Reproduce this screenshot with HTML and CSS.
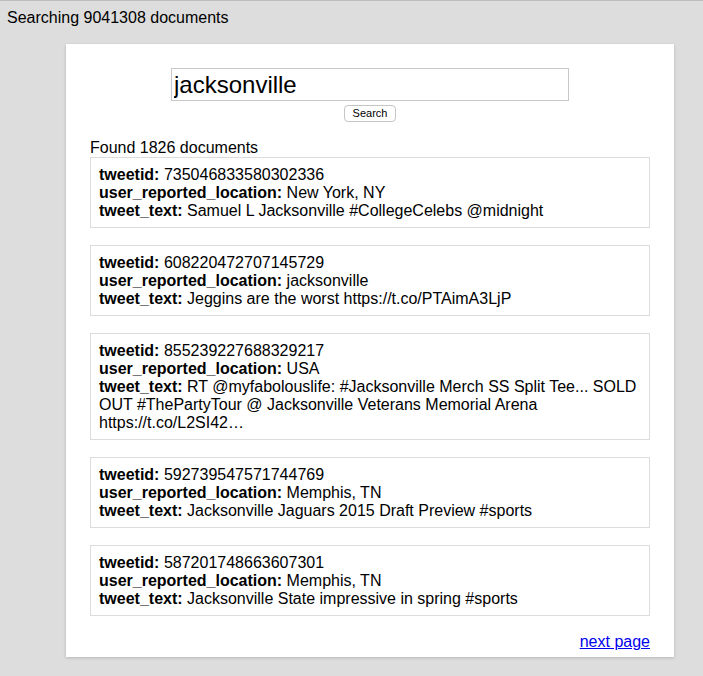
FILE: index.html
```html
<!DOCTYPE html>
<html>
<head>
<meta charset="utf-8">
<link rel="stylesheet" href="styles.css">
</head>
<body>
<div class="status">Searching 9041308 documents</div>
<div class="card">
  <form class="search">
    <input class="query" type="text" value="jacksonville">
    <button class="btn" type="button">Search</button>
  </form>
  <div class="found">Found 1826 documents</div>
  <div class="result">
    <div><b>tweetid:</b> 735046833580302336</div>
    <div><b>user_reported_location:</b> New York, NY</div>
    <div><b>tweet_text:</b> Samuel L Jacksonville #CollegeCelebs @midnight</div>
  </div>
  <div class="result">
    <div><b>tweetid:</b> 608220472707145729</div>
    <div><b>user_reported_location:</b> jacksonville</div>
    <div><b>tweet_text:</b> Jeggins are the worst https://t.co/PTAimA3LjP</div>
  </div>
  <div class="result">
    <div><b>tweetid:</b> 855239227688329217</div>
    <div><b>user_reported_location:</b> USA</div>
    <div><b>tweet_text:</b> RT @myfabolouslife: #Jacksonville Merch SS Split Tee... SOLD OUT #ThePartyTour @ Jacksonville Veterans Memorial Arena https://t.co/L2SI42…</div>
  </div>
  <div class="result">
    <div><b>tweetid:</b> 592739547571744769</div>
    <div><b>user_reported_location:</b> Memphis, TN</div>
    <div><b>tweet_text:</b> Jacksonville Jaguars 2015 Draft Preview #sports</div>
  </div>
  <div class="result">
    <div><b>tweetid:</b> 587201748663607301</div>
    <div><b>user_reported_location:</b> Memphis, TN</div>
    <div><b>tweet_text:</b> Jacksonville State impressive in spring #sports</div>
  </div>
  <div class="pager"><a href="#" class="next">next page</a></div>
</div>
</body>
</html>
```
FILE: styles.css
```css
html, body {
  margin: 0;
  padding: 0;
}
body {
  background: #dddddd;
  border-top: 1px solid #bdbdbd;
  font-family: "Liberation Sans", Arial, Helvetica, sans-serif;
  font-size: 16px;
  line-height: 18px;
  color: #000;
  height: 675px;
  overflow: hidden;
}
.status {
  padding: 8px 0 0 7px;
  height: 18px;
}
.card {
  margin: 17px 0 0 66px;
  width: 608px;
  box-sizing: border-box;
  background: #fff;
  padding: 24px 24px 6px;
  box-shadow: 0 1px 3px rgba(0, 0, 0, 0.18);
}
.search {
  display: flex;
  flex-direction: column;
  align-items: center;
  margin: 0;
}
.query {
  width: 398px;
  height: 33px;
  box-sizing: border-box;
  border: 1px solid #c8c8c8;
  padding: 0 2px;
  margin: 0;
  font-family: "Liberation Sans", Arial, sans-serif;
  font-size: 24px;
  color: #000;
  outline: none;
}
.btn {
  margin-top: 4px;
  height: 17px;
  padding: 0 8px;
  border: 1px solid #c4c4c4;
  border-radius: 4px;
  background: #fff;
  font-family: "Liberation Sans", Arial, sans-serif;
  font-size: 11px;
  line-height: 15px;
  color: #000;
}
.found {
  margin-top: 17px;
}
.result {
  border: 1px solid #dcdcdc;
  padding: 8px 8px 7px;
  margin-bottom: 17px;
}
.result b {
  font-weight: bold;
}
.pager {
  text-align: right;
}
.next {
  color: #0000ee;
  text-decoration: underline;
}
```
